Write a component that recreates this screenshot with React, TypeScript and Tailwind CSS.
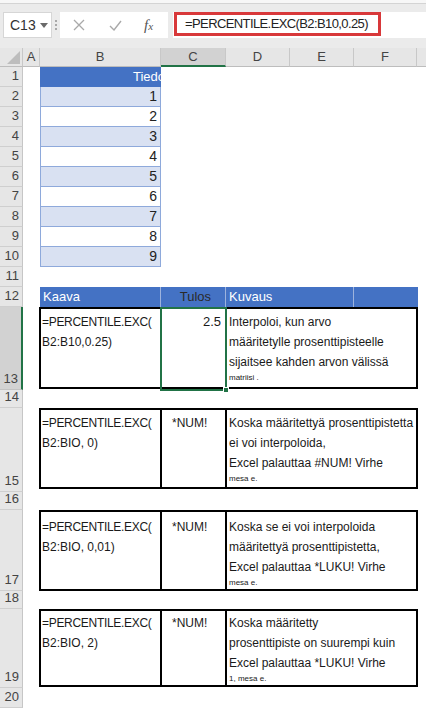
const sans = "font-['Liberation_Sans',Arial,sans-serif]"

function RowHead({ n, h, selected = false }: { n: number; h: string; selected?: boolean }) {
  return (
    <div
      className={`${h} w-[23px] shrink-0 flex items-end justify-end pr-[3px] pb-[2px] text-[13px] leading-[16px] text-[#444] border-b ${
        selected
          ? "bg-[#d2d2d2] border-b-[#c2c2c2] border-r-2 border-r-[#217346]"
          : "bg-[#e6e6e6] border-b-[#cfcfcf] border-r border-r-[#c6c6c6]"
      }`}
    >
      {n}
    </div>
  )
}

function ColHead({ label, w, selected = false }: { label: string; w: string; selected?: boolean }) {
  return (
    <div
      className={`${w} shrink-0 flex items-center justify-center text-[13px] text-[#444] border-r border-r-[#c8c8c8] ${
        selected ? "bg-[#d2d2d2] border-b-2 border-b-[#217346]" : "bg-[#e6e6e6] border-b border-b-[#bdbdbd]"
      }`}
    >
      {label}
    </div>
  )
}

interface ExampleRow {
  n: number
  rowH: string
  boxH: string
  pt: string
  args: string
  result: string
  lines: string[]
  tiny: string
}

const examples: ExampleRow[] = [
  {
    n: 15,
    rowH: "h-[84px]",
    boxH: "h-[81px]",
    pt: "pt-[3px]",
    args: "B2:BIO, 0)",
    result: "*NUM!",
    lines: ["Koska määritettyä prosenttipistetta", "ei voi interpoloida,", "Excel palauttaa #NUM! Virhe"],
    tiny: "mesa e.",
  },
  {
    n: 17,
    rowH: "h-[81px]",
    boxH: "h-[81px]",
    pt: "pt-[5px]",
    args: "B2:BIO, 0,01)",
    result: "*NUM!",
    lines: ["Koska se ei voi interpoloida", "määritettyä prosenttipistetta,", "Excel palauttaa *LUKU! Virhe"],
    tiny: "mesa e.",
  },
  {
    n: 19,
    rowH: "h-[79px]",
    boxH: "h-[78px]",
    pt: "pt-[2px]",
    args: "B2:BIO, 2)",
    result: "*NUM!",
    lines: ["Koska määritetty", "prosenttipiste on suurempi kuin", "Excel palauttaa *LUKU! Virhe"],
    tiny: "1, mesa e.",
  },
]

function FormulaBar() {
  return (
    <div className="h-[48px] bg-[#ebebeb]">
      <div className="h-[3px] bg-[#f7f7f7]" />
      <div className="h-[1px] bg-[#d4d4d4]" />
      <div className="flex items-start pt-[8px]">
        {/* name box */}
        <div className="ml-[3px] w-[49px] h-[26px] bg-white border border-[#d6d6d6] flex items-center pl-[6px] text-[14px] text-[#333]">
          <span>C13</span>
          <svg width="8" height="5" viewBox="0 0 8 5" className="ml-[4px]">
            <polygon points="0,0 8,0 4,5" fill="#6a6a6a" />
          </svg>
        </div>
        {/* grip */}
        <div className="w-[8px] h-[26px] flex flex-col items-center justify-center gap-[2px]">
          <div className="w-[2px] h-[2px] bg-[#a8a8a8]" />
          <div className="w-[2px] h-[2px] bg-[#a8a8a8]" />
          <div className="w-[2px] h-[2px] bg-[#a8a8a8]" />
        </div>
        {/* cancel / enter / fx */}
        <div className="w-[108px] h-[26px] bg-white flex items-center">
          <svg width="12" height="12" viewBox="0 0 12 12" className="ml-[13px]">
            <path d="M1 1 L11 11 M11 1 L1 11" stroke="#a9a9a9" strokeWidth="1.3" fill="none" />
          </svg>
          <svg width="13" height="11" viewBox="0 0 13 11" className="ml-[24px]">
            <path d="M1 6 L5 10 L12 1" stroke="#a9a9a9" strokeWidth="1.4" fill="none" />
          </svg>
          <span className="ml-[22px] font-['Liberation_Serif',serif] italic text-[15px] leading-none text-[#555]">
            f<span className="text-[11px]">x</span>
          </span>
        </div>
        {/* formula */}
        <div className="ml-[5px] flex-1 h-[26px] bg-white">
          <div className="ml-[1px] w-[207px] h-[24px] border-[3px] border-[#d8383a] flex items-center pl-[8px] text-[13px] tracking-[-0.6px] text-[#222] whitespace-nowrap">
            =PERCENTILE.EXC(B2:B10,0.25)
          </div>
        </div>
      </div>
    </div>
  )
}

function DescLines({ lines, tiny }: { lines: string[]; tiny: string }) {
  return (
    <>
      {lines.map((l) => (
        <div key={l} className="h-[20px] leading-[20px] whitespace-nowrap">
          {l}
        </div>
      ))}
      <div className="h-[12px] leading-[12px] text-[8px] whitespace-nowrap">{tiny}</div>
    </>
  )
}

export default function App() {
  return (
    <div className={`${sans} w-[426px] h-[710px] overflow-hidden bg-white`}>
      <FormulaBar />

      {/* column headers */}
      <div className="flex h-[19px]">
        <div className="w-[23px] shrink-0 bg-[#e6e6e6] border-r border-r-[#c8c8c8] border-b border-b-[#bdbdbd] flex items-end justify-end pr-[2px] pb-[2px]">
          <svg width="13" height="13" viewBox="0 0 13 13">
            <polygon points="13,0 13,13 0,13" fill="#bdbdbd" />
          </svg>
        </div>
        <ColHead label="A" w="w-[17px]" />
        <ColHead label="B" w="w-[121px]" />
        <ColHead label="C" w="w-[65px]" selected />
        <ColHead label="D" w="w-[64px]" />
        <ColHead label="E" w="w-[64px]" />
        <ColHead label="F" w="w-[63px]" />
        <div className="flex-1 bg-[#e6e6e6] border-b border-b-[#bdbdbd]" />
      </div>

      {/* data table */}
      <div className="flex h-[20px]">
        <RowHead n={1} h="h-[20px]" />
        <div className="w-[17px] shrink-0" />
        <div className="w-[121px] shrink-0 bg-[#4472c4] overflow-hidden whitespace-nowrap pl-[93px] text-[13px] leading-[20px] text-white">
          Tiedot
        </div>
      </div>
      {[1, 2, 3, 4, 5, 6, 7, 8, 9].map((v, i) => (
        <div key={v} className="flex h-[20px]">
          <RowHead n={i + 2} h="h-[20px]" />
          <div className="w-[17px] shrink-0" />
          <div
            className={`w-[121px] shrink-0 flex items-center justify-end pr-[3px] text-[14px] text-[#222] border-x border-b border-[#8ea9db] ${
              i % 2 === 0 ? "bg-[#d9e1f2]" : "bg-white"
            }`}
          >
            {v}
          </div>
        </div>
      ))}

      <div className="flex h-[20px]">
        <RowHead n={11} h="h-[20px]" />
      </div>

      {/* header of the formula table */}
      <div className="flex h-[20px]">
        <RowHead n={12} h="h-[20px]" />
        <div className="w-[17px] shrink-0" />
        <div className="w-[378px] shrink-0 bg-[#4472c4] flex text-[13px] leading-[20px]">
          <div className="w-[121px] pl-[3px] text-white border-r border-r-[#9db3dd]">Kaava</div>
          <div className="w-[65px] pr-[14px] text-right text-[#2a2a2a] border-r border-r-[#9db3dd]">Tulos</div>
          <div className="w-[128px] pl-[3px] text-white border-r border-r-[#9db3dd]">Kuvaus</div>
          <div className="flex-1" />
        </div>
      </div>

      {/* row 13 */}
      <div className="flex h-[83px]">
        <RowHead n={13} h="h-[83px]" selected />
        <div className="w-[16px] shrink-0" />
        <div className="relative w-[379px] h-[82px] border-2 border-black flex text-[12px] text-[#1a1a1a]">
          <div className="w-[121px] shrink-0 border-r-2 border-black pl-[1px] pt-[3px] leading-[20px] tracking-[-0.3px] whitespace-nowrap">
            <div>=PERCENTILE.EXC(</div>
            <div className="tracking-normal">B2:B10,0.25)</div>
          </div>
          <div className="w-[65px] shrink-0 border-r-2 border-black pt-[3px] pr-[4px] text-right leading-[20px] text-[13px]">
            2.5
          </div>
          <div className="flex-1 pl-[2px] pt-[3px]">
            <DescLines
              lines={["Interpoloi, kun arvo", "määritetylle prosenttipisteelle", "sijaitsee kahden arvon välissä"]}
              tiny="matriisi ."
            />
          </div>
          {/* active cell C13 */}
          <div className="absolute left-[119px] top-[-2px] w-[67px] h-[84px] border-2 border-[#217346]">
            <div className="absolute right-[-4px] bottom-[-4px] w-[6px] h-[6px] bg-[#217346] border border-white" />
          </div>
        </div>
      </div>

      {examples.map((ex) => (
        <div key={ex.n}>
          <div className="flex h-[18px]">
            <RowHead n={ex.n - 1} h="h-[18px]" />
          </div>
          <div className={`flex ${ex.rowH}`}>
            <RowHead n={ex.n} h={ex.rowH} />
            <div className="w-[16px] shrink-0" />
            <div className={`w-[379px] ${ex.boxH} border-2 border-black flex text-[12px] text-[#1a1a1a]`}>
              <div className={`w-[121px] shrink-0 border-r-2 border-black pl-[1px] ${ex.pt} leading-[20px] whitespace-nowrap`}>
                <div className="tracking-[-0.3px]">=PERCENTILE.EXC(</div>
                <div>{ex.args}</div>
              </div>
              <div className={`w-[65px] shrink-0 border-r-2 border-black pl-[10px] ${ex.pt} leading-[20px]`}>
                {ex.result}
              </div>
              <div className={`flex-1 pl-[2px] ${ex.pt}`}>
                <DescLines lines={ex.lines} tiny={ex.tiny} />
              </div>
            </div>
          </div>
        </div>
      ))}

      <div className="flex h-[20px]">
        <RowHead n={20} h="h-[20px]" />
      </div>
    </div>
  )
}
